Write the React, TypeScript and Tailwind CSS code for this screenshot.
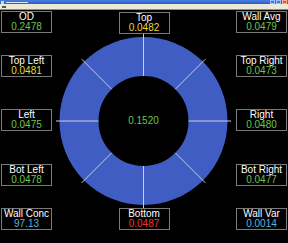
import React from 'react';

/* Cross-section readout: ring of 8 sectors with value boxes round it */

type Box = { label: string; value: string; tone: string };

const GREEN = 'text-[#6cc44c]';
const YELLOW = 'text-[#e6da3c]';
const RED = 'text-[#e8392c]';
const CYAN = 'text-[#5cb4d8]';

const ValueBox: React.FC<Box> = ({ label, value, tone }) => (
  <div className="w-[51px] h-[22px] border border-[#7a7a7a] bg-black flex flex-col shrink-0">
    <div className="h-[10px] flex items-center justify-center text-[10px] leading-none text-white">
      {label}
    </div>
    <div className="h-px bg-[#7a7a7a]" />
    <div className={`flex-1 flex items-center justify-center text-[10px] leading-none ${tone}`}>
      {value}
    </div>
  </div>
);

const Ring: React.FC = () => {
  const cx = 91.5;
  const cy = 87;
  const rIn = 45;
  const rOut = 84;
  const rLine = 87.5;
  const angles = [0, 45, 90, 135, 180, 225, 270, 315];
  return (
    <svg width="184" height="174" className="block">
      <circle cx={cx} cy={cy} r={(rIn + rOut) / 2} fill="none" stroke="#3f5dc2" strokeWidth={rOut - rIn} />
      {angles.map((a) => {
        const rad = (a * Math.PI) / 180;
        const vertical = a === 90 || a === 270;
        const end = vertical ? 88 : rLine;
        return (
          <line
            key={a}
            x1={cx + rIn * Math.cos(rad)}
            y1={cy + rIn * Math.sin(rad)}
            x2={cx + end * Math.cos(rad)}
            y2={cy + end * Math.sin(rad)}
            stroke="#c9cde0"
            strokeWidth="1"
          />
        );
      })}
      <text
        x={cx}
        y={cy - 1}
        textAnchor="middle"
        dominantBaseline="central"
        fontSize="10"
        fill="#6cc44c"
        fontFamily="'Liberation Sans', Arial, sans-serif"
      >
        0.1520
      </text>
    </svg>
  );
};

export default function App() {
  return (
    <div className="w-[288px] h-[243px] bg-black overflow-hidden font-['Liberation_Sans',Arial,sans-serif]">
      {/* ── Title bar ── */}
      <div className="h-[4px] bg-gradient-to-b from-[#4a7fe0] to-[#2a5cc8] flex items-center justify-between px-[1px]">
        <div className="flex items-center gap-[2px]">
          <div className="w-[3px] h-[3px] bg-[#d8d8d8]" />
          <div className="w-[22px] h-[1px] bg-[#dfe8ff]" />
        </div>
        <div className="flex items-center gap-[1px]">
          <div className="w-[5px] h-[4px] bg-[#3f76e6] border border-[#9fc0ff]" />
          <div className="w-[5px] h-[4px] bg-[#3f76e6] border border-[#9fc0ff]" />
          <div className="w-[5px] h-[4px] bg-[#e0542c] border border-[#ffb090]" />
        </div>
      </div>
      {/* ── Menu bar ── */}
      <div className="h-[6px] bg-[#ece9d8] border-b border-[#8a8a8a] flex items-center px-[2px]">
        <div className="w-[4px] h-[2px] bg-[#555]" />
      </div>

      {/* ── Body ── */}
      <div className="flex px-[1px]">
        <div className="w-[51px] flex flex-col pt-[1px]">
          <ValueBox label="OD" value="0.2478" tone={GREEN} />
          <div className="mt-[22px]">
            <ValueBox label="Top Left" value="0.0481" tone={YELLOW} />
          </div>
          <div className="mt-[32px]">
            <ValueBox label="Left" value="0.0475" tone={GREEN} />
          </div>
          <div className="mt-[33px]">
            <ValueBox label="Bot Left" value="0.0478" tone={GREEN} />
          </div>
          <div className="mt-[22px]">
            <ValueBox label="Wall Conc" value="97.13" tone={CYAN} />
          </div>
        </div>

        <div className="w-[184px] flex flex-col items-center pt-[2px]">
          <ValueBox label="Top" value="0.0482" tone={YELLOW} />
          <Ring />
          <ValueBox label="Bottom" value="0.0487" tone={RED} />
        </div>

        <div className="w-[51px] flex flex-col pt-[1px]">
          <ValueBox label="Wall Avg" value="0.0479" tone={GREEN} />
          <div className="mt-[22px]">
            <ValueBox label="Top Right" value="0.0473" tone={GREEN} />
          </div>
          <div className="mt-[32px]">
            <ValueBox label="Right" value="0.0480" tone={GREEN} />
          </div>
          <div className="mt-[33px]">
            <ValueBox label="Bot Right" value="0.0477" tone={GREEN} />
          </div>
          <div className="mt-[22px]">
            <ValueBox label="Wall Var" value="0.0014" tone={CYAN} />
          </div>
        </div>
      </div>
    </div>
  );
}
